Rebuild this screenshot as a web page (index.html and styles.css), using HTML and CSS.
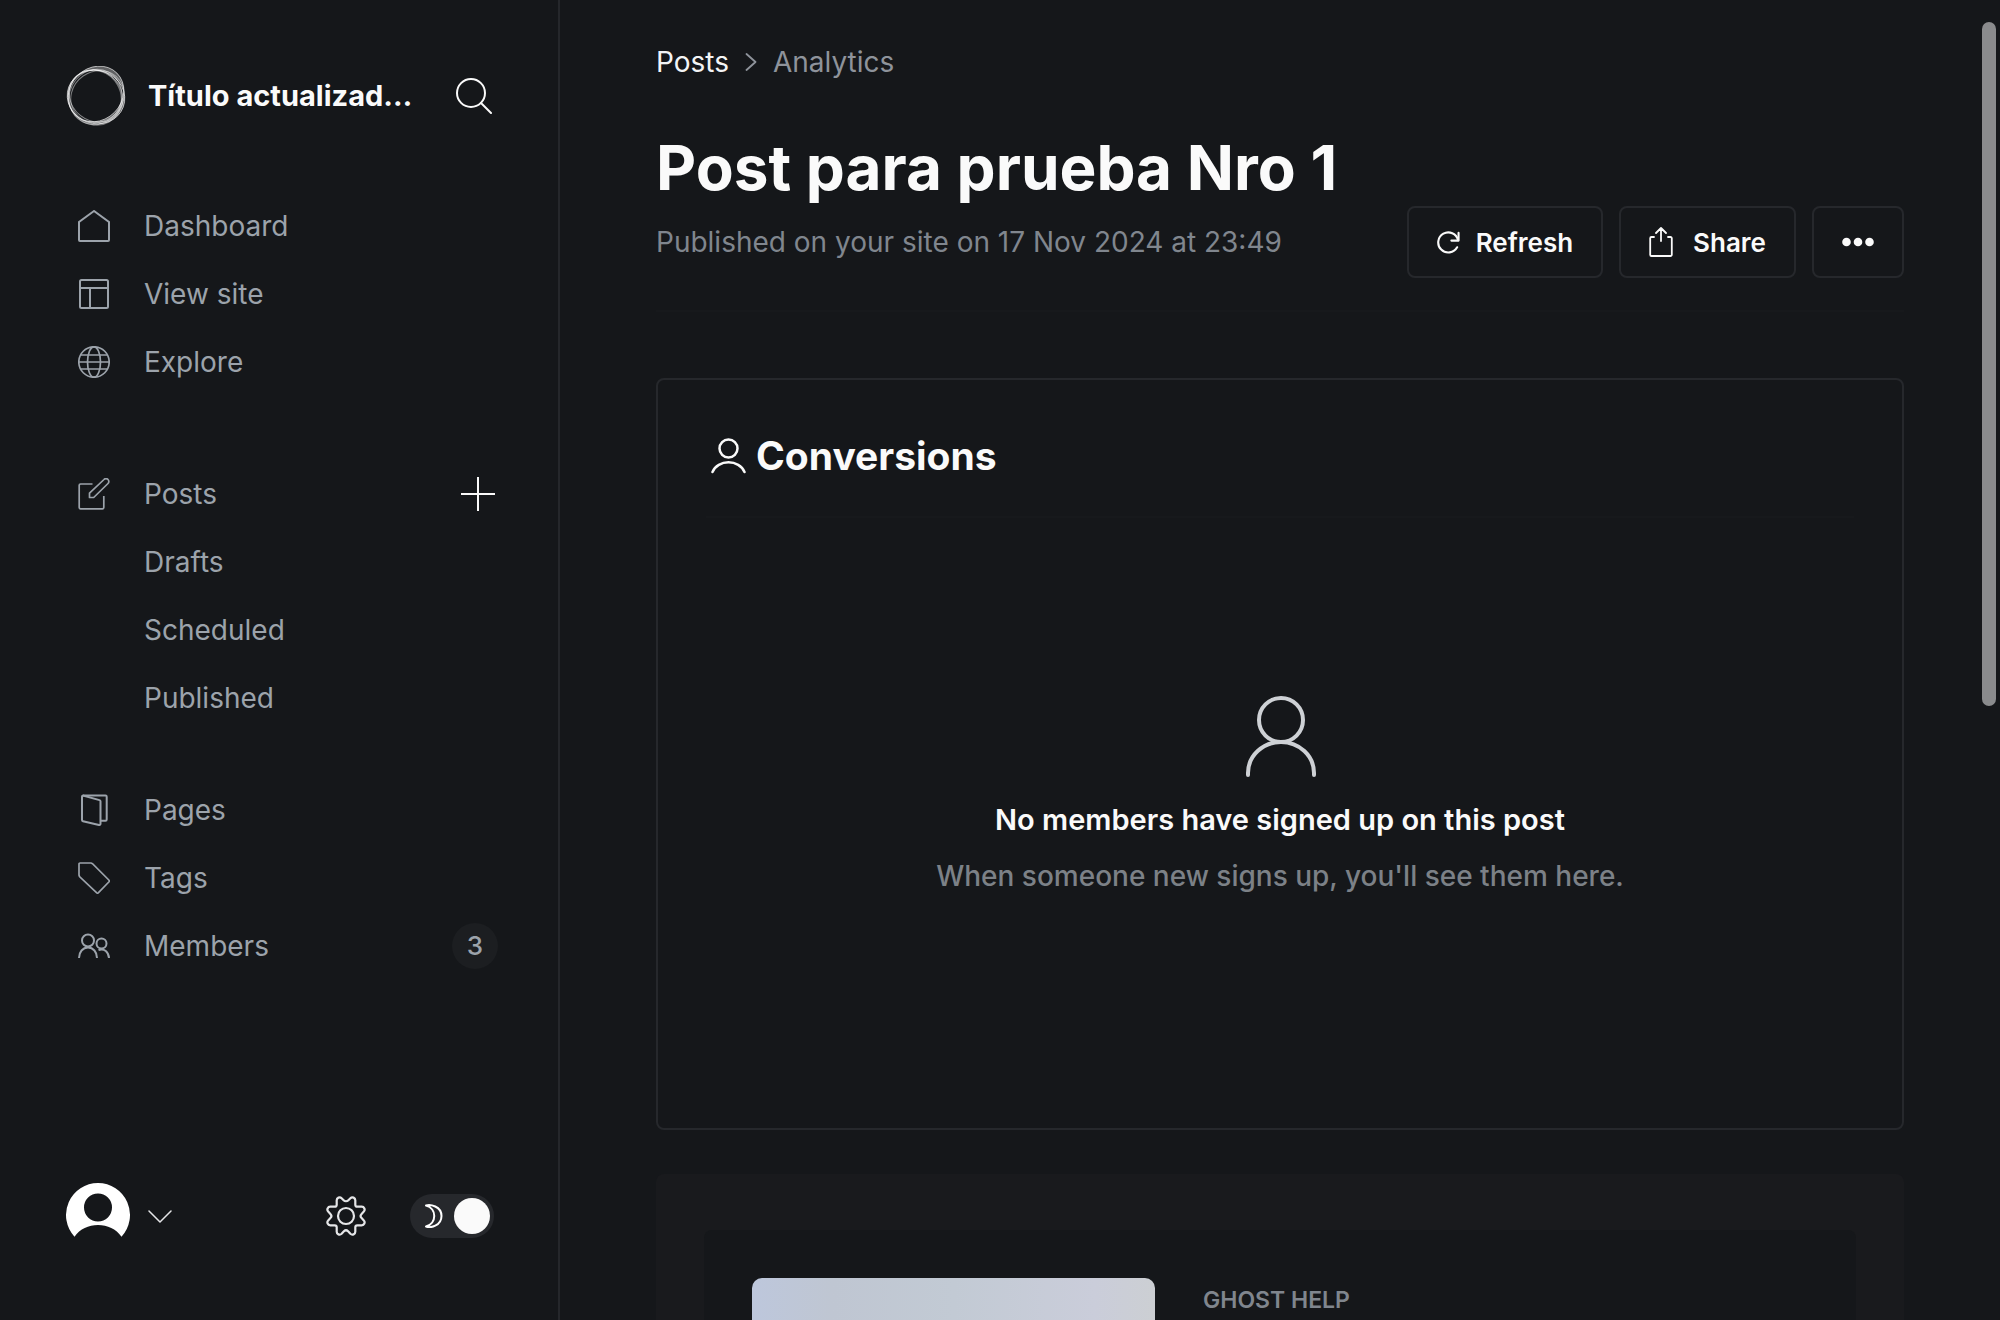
FILE: index.html
```html
<!DOCTYPE html>
<html lang="en">
<head>
<meta charset="utf-8">
<meta name="viewport" content="width=device-width, initial-scale=1">
<title>Post para prueba Nro 1 - Analytics</title>
<link rel="stylesheet" href="styles.css">
</head>
<body>
<div class="app">
  <aside class="sidebar">
    <header class="site">
      <svg class="site-logo" viewBox="0 0 60 60" fill="none" stroke="#fff" aria-hidden="true">
        <path d="M50.900 7.100A29.500 26 -45 1 1 9.100 48.900A29.500 26 -45 1 1 50.900 7.100zM57.300 40.900A29 26.500 20 1 1 2.700 21.100A29 26.500 20 1 1 57.300 40.900z" fill="#fff" fill-opacity=".32" fill-rule="evenodd" stroke-opacity=".65" stroke-width="1"/>
        <ellipse cx="29.500" cy="31" rx="28" ry="26" transform="rotate(-62 29.500 31)" stroke-opacity=".45"/>
        <ellipse cx="30" cy="30" rx="28" ry="25" transform="rotate(38 30 30)" stroke-opacity=".5"/>
        <ellipse cx="31.500" cy="30.500" rx="27.500" ry="25" transform="rotate(-35 31.500 30.500)" stroke-opacity=".45"/>
        <ellipse cx="29" cy="31.500" rx="28" ry="26" transform="rotate(60 29 31.500)" stroke-opacity=".4" stroke-width="1.500"/>
      </svg>
      <span class="site-title">Título actualizad…</span>
      <button class="icon-button search" type="button" aria-label="Search">
        <svg width="36" height="36" viewBox="0 0 36 36" fill="none" stroke="currentColor" stroke-width="2" stroke-linecap="round"><circle cx="15" cy="15" r="14"/><path d="M25 25l10 10"/></svg>
      </button>
    </header>

    <nav class="nav" aria-label="Main">
      <ul class="nav-group">
        <li><a class="nav-link" href="#"><svg class="nav-icon" viewBox="0 0 32 32"><path d="M16 1L1 12v18a1 1 0 0 0 1 1h28a1 1 0 0 0 1-1V12z"/></svg>Dashboard</a></li>
        <li><a class="nav-link" href="#"><svg class="nav-icon" viewBox="0 0 32 32"><rect x="2" y="2" width="28" height="28" rx="1.500"/><path d="M2 10h28M12 10v20"/></svg>View site</a></li>
        <li><a class="nav-link" href="#"><svg class="nav-icon thin" viewBox="0 0 32 32"><circle cx="16" cy="16" r="15.200"/><ellipse cx="16" cy="16" rx="6.500" ry="15.200"/><path d="M1 16h30M3 9h26M3 23h26"/></svg>Explore</a></li>
      </ul>
      <ul class="nav-group">
        <li class="nav-row"><a class="nav-link" href="#"><svg class="nav-icon thin" viewBox="0 0 32 32"><path d="M14.500 6H2.500a1.300 1.300 0 0 0-1.300 1.300v22.200a1.300 1.300 0 0 0 1.300 1.300h22a1.300 1.300 0 0 0 1.300-1.300V18"/><path d="M11.500 19.500v-4.300L26 1.500a2.800 2.800 0 0 1 4 0 2.800 2.800 0 0 1 0 4L15.700 19.500z" stroke-linejoin="round"/></svg>Posts</a>
          <button class="icon-button add" type="button" aria-label="New post"><svg width="34" height="34" viewBox="0 0 34 34" stroke="currentColor" stroke-width="2"><path d="M17 0v34M0 17h34"/></svg></button></li>
        <li><a class="nav-link sub" href="#">Drafts</a></li>
        <li><a class="nav-link sub" href="#">Scheduled</a></li>
        <li><a class="nav-link sub" href="#">Published</a></li>
      </ul>
      <ul class="nav-group">
        <li><a class="nav-link" href="#"><svg class="nav-icon" viewBox="0 0 32 32"><path d="M5 1.500h22.500a1.200 1.200 0 0 1 1.200 1.200V25.500a1.200 1.200 0 0 1-1.200 1.200H23"/><path d="M5 1.500a1.300 1.300 0 0 0-1 1.300V26a1.300 1.300 0 0 0 1 1.200l16 3.800a1.200 1.200 0 0 0 1.500-1.200V7.300a1.300 1.300 0 0 0-1-1.200z"/></svg>Pages</a></li>
        <li><a class="nav-link" href="#"><svg class="nav-icon thin" viewBox="0 0 32 32"><path d="M1 2a1 1 0 0 1 1-1h11l1.500.7L30.800 18a1.500 1.500 0 0 1 0 2L20.500 30.700a1.500 1.500 0 0 1-2 0L1.500 14.500 1 13z"/></svg>Tags</a></li>
        <li class="nav-row"><a class="nav-link" href="#"><svg class="nav-icon" viewBox="0 0 32 32"><circle cx="10" cy="10.500" r="6"/><path d="M1 28c0-6 3.800-10.500 9-10.500S19 22 19 28"/><circle cx="23.500" cy="13.500" r="5"/><path d="M20.500 20c6-2 10 2 10.500 8"/></svg>Members</a><span class="badge">3</span></li>
      </ul>
    </nav>

    <footer class="user-bar">
      <button class="icon-button user" type="button" aria-label="User menu">
        <svg width="64" height="66" viewBox="0 0 64 66"><path d="M32 0a32 32 0 0 0-23.500 53.700C14 46 22.500 42 32 42s18 4 23.500 11.700A32 32 0 0 0 32 0zm0 38.500a14 14 0 1 1 0-28 14 14 0 0 1 0 28z" fill="#fff" fill-rule="evenodd"/></svg>
        <svg width="24" height="14" viewBox="0 0 24 14" fill="none" stroke="currentColor" stroke-width="1.500" stroke-linecap="round" stroke-linejoin="round"><path d="M1 2l11 11L23 2"/></svg>
      </button>
      <a class="icon-button settings" href="#" aria-label="Settings">
        <svg width="40" height="40" viewBox="0 0 40 40" fill="none" stroke="currentColor" stroke-width="2.200" stroke-linejoin="round"><circle cx="20" cy="20" r="8"/><path d="M17.600 4.200l-2-2a2.900 2.900 0 0 0-4.900 2.100v4.400a2 2 0 0 1-2 2H4.300a2.900 2.900 0 0 0-2.100 4.900l2.200 2.300a3 3 0 0 1 0 4.200l-2.200 2.300a2.900 2.900 0 0 0 2.100 4.900h4.400a2 2 0 0 1 2 2v4.400a2.900 2.900 0 0 0 4.900 2.100l2.300-2.500a3 3 0 0 1 4.200 0l2.300 2.500a2.900 2.900 0 0 0 4.900-2.100v-4.400a2 2 0 0 1 2-2h4.400a2.900 2.900 0 0 0 2.100-4.900l-2.200-2.300a3 3 0 0 1 0-4.200l2.200-2.300a2.900 2.900 0 0 0-2.100-4.900h-4.400a2 2 0 0 1-2-2V4.300a2.900 2.900 0 0 0-4.900-2.100l-2 2a3.300 3.300 0 0 1-4.800 0z"/></svg>
      </a>
      <label class="toggle">
        <input type="checkbox" checked aria-label="Dark mode">
        <svg width="18" height="24" viewBox="0 0 18 24" fill="none" stroke="#fff" stroke-width="2" stroke-linejoin="round" aria-hidden="true"><path d="M1 1.500c4-1.300 15.500.5 15.500 10.500S5 24.300 1 22.500C12 19.500 12 4.500 1 1.500z"/></svg>
      </label>
    </footer>
  </aside>

  <main class="main">
    <nav class="breadcrumb" aria-label="Breadcrumb">
      <a href="#">Posts</a>
      <svg width="12" height="18" viewBox="0 0 12 18" fill="none" stroke="currentColor" stroke-width="1.800" stroke-linecap="round" stroke-linejoin="round"><path d="M1.500 1l9 8-9 8"/></svg>
      <span>Analytics</span>
    </nav>
    <header class="post-header">
      <div class="post-info">
        <h1>Post para prueba Nro 1</h1>
        <p>Published on your site on 17 Nov 2024 at 23:49</p>
      </div>
      <div class="actions">
        <button class="button" type="button"><svg width="23" height="23" viewBox="0 0 24 24" fill="none" stroke="currentColor" stroke-width="2.200" stroke-linecap="round" stroke-linejoin="round"><path d="M22.500 2v8H15"/><path d="M22 9.500A10.500 10.500 0 1 0 21 17"/></svg>Refresh</button>
        <button class="button share" type="button"><svg width="24" height="30" viewBox="1 0 24 30" fill="none" stroke="currentColor" stroke-width="1.800" stroke-linecap="round" stroke-linejoin="round"><path d="M6 10H3.500A1.300 1.300 0 0 0 2.200 11.300v16.400A1.300 1.300 0 0 0 3.500 29h19a1.300 1.300 0 0 0 1.300-1.300V11.300A1.300 1.300 0 0 0 22.500 10H20M13 14V1M8 6l5-5 5 5"/></svg>Share</button>
        <button class="button" type="button" aria-label="More"><svg width="32" height="10" viewBox="0 0 32 10" fill="currentColor"><circle cx="4.500" cy="5" r="4.300"/><circle cx="16" cy="5" r="4.300"/><circle cx="27.500" cy="5" r="4.300"/></svg></button>
      </div>
    </header>

    <section class="card">
      <h2><svg width="36" height="36" viewBox="0 0 36 36" fill="none" stroke="currentColor" stroke-width="2.500" stroke-linecap="round"><circle cx="18.500" cy="10.500" r="9"/><path d="M2.500 34c2.500-6 9-9.700 16-9.700S32 28 34.500 34"/></svg>Conversions</h2>
      <div class="empty">
        <svg width="72" height="82" viewBox="0 0 72 82" fill="none" stroke="currentColor" stroke-width="4" stroke-linecap="round"><circle cx="37" cy="24" r="22"/><path d="M4 79V77a33 31 0 0 1 66 0v2"/></svg>
        <h3>No members have signed up on this post</h3>
        <p>When someone new signs up, you'll see them here.</p>
      </div>
    </section>

    <section class="resources">
      <a class="resource" href="#">
        <span class="thumb"></span>
        <span class="source">GHOST HELP</span>
      </a>
    </section>
    <div class="scrollbar"></div>
  </main>
</div>
</body>
</html>
```

FILE: styles.css
```css
* {
  box-sizing: border-box;
}

body {
  margin: 0;
  background: #15171a;
  color: #fafafa;
  font: 28px/36px Inter, "Liberation Sans", sans-serif;
}

h1, h2, h3, p, ul {
  margin: 0;
  padding: 0;
}

ul {
  list-style: none;
}

a {
  color: inherit;
  text-decoration: none;
}

button {
  font-family: inherit;
  color: inherit;
  background: none;
  border: 0;
  padding: 0;
}

svg {
  display: block;
  flex: none;
}

.app {
  display: flex;
  height: 100vh;
  overflow: hidden;
}

/* Sidebar */
.sidebar {
  display: flex;
  flex-direction: column;
  flex: none;
  width: 560px;
  border-right: 2px solid #25272b;
  padding: 64px 60px 68px 64px;
}

.site {
  display: flex;
  align-items: center;
  height: 64px;
  padding-right: 6px;
}

.site-logo {
  width: 60px;
  height: 60px;
  margin: 0 2px;
}

.site-title {
  flex: 1;
  min-width: 0;
  margin: 0 24px 0 20px;
  overflow: hidden;
  white-space: nowrap;
  text-overflow: ellipsis;
  font-size: 29px;
  font-weight: 700;
}

.icon-button {
  display: flex;
  align-items: center;
  flex: none;
}

.nav {
  flex: 1;
  padding-top: 64px;
  color: #9ca3ab;
}

.nav-group {
  margin-bottom: 44px;
}

.nav-group:first-child {
  margin-bottom: 64px;
}

.nav-row {
  display: flex;
  align-items: center;
}

.nav-row .nav-link {
  flex: 1;
}

.nav-link {
  display: flex;
  align-items: center;
  gap: 34px;
  height: 68px;
  padding-left: 14px;
}

.nav-link.sub {
  padding-left: 80px;
}

.nav-icon {
  width: 32px;
  height: 32px;
  fill: none;
  stroke: currentColor;
  stroke-width: 2;
}

.nav-icon.thin {
  stroke-width: 1.7;
}

.add {
  margin-right: 3px;
  color: #fafafa;
}

.badge {
  display: grid;
  place-items: center;
  width: 46px;
  height: 46px;
  border-radius: 50%;
  background: #1c1e21;
  font-size: 26px;
  font-weight: 500;
}

.user-bar {
  display: flex;
  align-items: center;
  height: 72px;
  padding: 0 4px 0 2px;
}

.user {
  gap: 18px;
  margin-right: auto;
  color: #e5e6e8;
}

.settings {
  margin-right: 44px;
  color: #e5e6e8;
}

.toggle {
  display: grid;
  align-items: center;
}

.toggle input,
.toggle svg {
  grid-area: 1 / 1;
}

.toggle svg {
  margin-left: 15px;
}

.toggle input {
  appearance: none;
  display: flex;
  align-items: center;
  width: 84px;
  height: 44px;
  margin: 0;
  padding: 4px;
  border-radius: 22px;
  background: #26282c;
}

.toggle input::before {
  content: "";
  width: 36px;
  height: 36px;
  border-radius: 50%;
  background: #fafafa;
}

.toggle input:checked::before {
  margin-left: auto;
}

/* Main column */
.main {
  position: relative;
  flex: 1;
  min-width: 0;
  overflow: hidden;
  padding: 44px 96px 0;
}

.breadcrumb {
  display: flex;
  align-items: center;
  gap: 16px;
  color: #8e939b;
}

.breadcrumb a {
  color: #f3f4f5;
}

.post-header {
  display: flex;
  align-items: flex-end;
  justify-content: space-between;
  padding: 48px 0 32px;
  border-bottom: 2px solid #17191c;
}

h1 {
  font-size: 62px;
  line-height: 80px;
  font-weight: 700;
}

.post-info p {
  margin-top: 16px;
  margin-bottom: 18px;
  color: #80868e;
}

.actions {
  display: flex;
  gap: 16px;
}

.button {
  display: flex;
  align-items: center;
  gap: 16px;
  height: 72px;
  padding: 0 28px;
  border: 2px solid #26282c;
  border-radius: 8px;
  font-size: 26px;
  font-weight: 600;
}

.button.share {
  gap: 20px;
}

.card {
  display: flex;
  flex-direction: column;
  height: 752px;
  margin-top: 66px;
  padding: 0 48px;
  border: 2px solid #26282c;
  border-radius: 8px;
}

.card h2 {
  display: flex;
  align-items: center;
  gap: 10px;
  padding: 50px 4px 34px;
  border-bottom: 2px solid #17191c;
  font-size: 39px;
  line-height: 52px;
  font-weight: 700;
}

.empty {
  flex: 1;
  display: flex;
  flex-direction: column;
  align-items: center;
  justify-content: center;
  padding-bottom: 56px;
  color: #ced1d5;
}

.empty h3 {
  margin-top: 24px;
  color: #fafafa;
  font-size: 29px;
  line-height: 36px;
  font-weight: 600;
}

.empty p {
  margin-top: 20px;
  color: #7c8187;
  font-weight: 500;
}

.resources {
  margin-top: 44px;
  padding: 56px 48px;
  border-radius: 8px;
  background: #191a1d;
}

.resource {
  display: flex;
  gap: 48px;
  padding: 48px;
  border-radius: 8px;
  background: #15171a;
}

.thumb {
  flex: none;
  width: 403px;
  height: 250px;
  border-radius: 10px;
  background: linear-gradient(90deg, #bdc7dc, #bfc6d2 20%, #c2cad4 50%, #cacdda 85%, #cccfd3);
}

.source {
  padding-top: 4px;
  color: #80868e;
  font-size: 23px;
  font-weight: 600;
}

.scrollbar {
  position: absolute;
  top: 22px;
  right: 4px;
  width: 14px;
  height: 684px;
  border-radius: 7px;
  background: #8a8b8d;
}
```
